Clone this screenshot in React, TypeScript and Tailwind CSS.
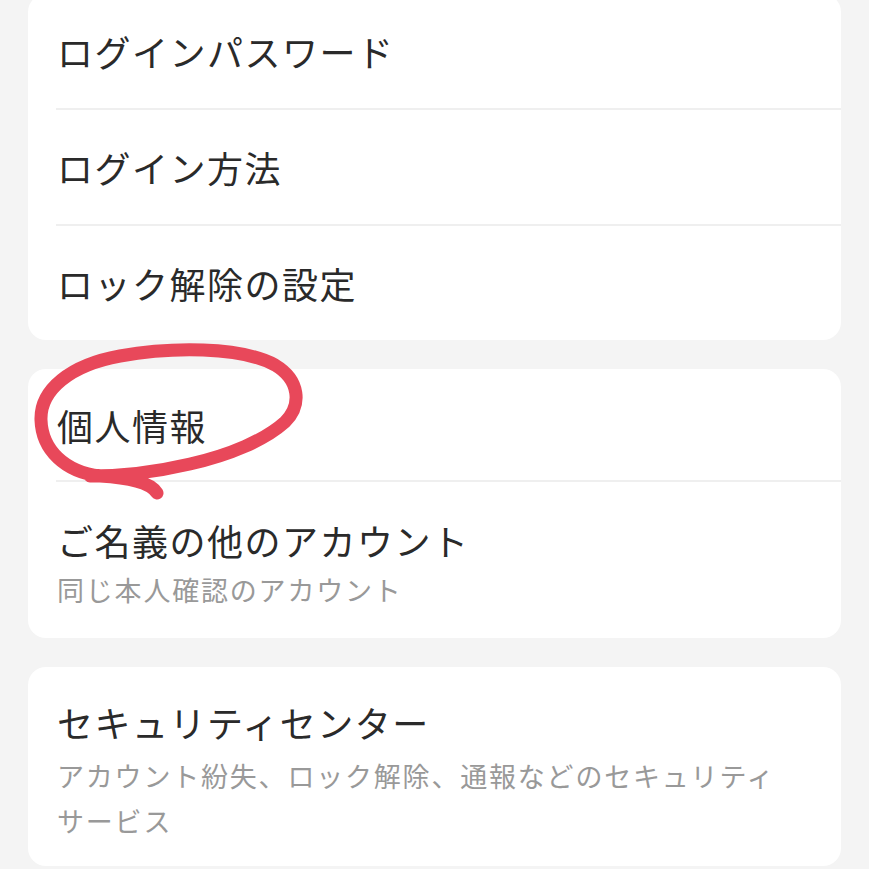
const font = { fontFamily: '"Noto Sans CJK JP", "Noto Sans", sans-serif' };

function Row({ title, last }: { title: string; last?: boolean }) {
  return (
    <div
      className={`ml-[28px] pl-[1px] flex items-center ${
        last ? "h-[114px]" : "h-[116px] border-b-2 border-[#efefef]"
      }`}
    >
      <span className="text-[36px] tracking-[1.5px] text-[#2a2a2a]">{title}</span>
    </div>
  );
}

function RedCircle() {
  return (
    <svg
      className="absolute left-0 top-0 pointer-events-none"
      width="869"
      height="869"
      viewBox="0 0 869 869"
    >
      <path
        d="M 157 493 C 150 482, 130 478, 100 476 C 65 472, 42 450, 41 420 C 40 390, 70 365, 120 356 C 170 347, 240 346, 275 365 C 300 380, 302 405, 285 422 C 265 440, 230 455, 190 464 C 160 471, 125 476, 90 476"
        fill="none"
        stroke="#e8485a"
        strokeWidth="13"
        strokeLinecap="round"
        strokeLinejoin="round"
      />
    </svg>
  );
}

export default function App() {
  return (
    <div className="relative min-h-[869px] bg-[#f4f4f4] px-[28px] overflow-hidden" style={font}>
      <div className="flex flex-col gap-[29px] -mt-[6px]">
        {/* アカウント設定 */}
        <div className="bg-white rounded-[18px]">
          <Row title="ログインパスワード" />
          <Row title="ログイン方法" />
          <Row title="ロック解除の設定" last />
        </div>

        {/* 個人情報 */}
        <div className="bg-white rounded-[18px]">
          <div className="ml-[28px] pl-[1px] h-[113px] flex items-center border-b-2 border-[#efefef]">
            <span className="text-[36px] tracking-[1.5px] text-[#2a2a2a]">個人情報</span>
          </div>
          <div className="ml-[28px] pl-[1px] pt-[34px] pb-[26px] flex flex-col">
            <span className="text-[36px] leading-[48px] tracking-[1.5px] text-[#2a2a2a]">
              ご名義の他のアカウント
            </span>
            <span className="mt-[4px] text-[27px] leading-[44px] tracking-[1.8px] text-[#999999]">
              同じ本人確認のアカウント
            </span>
          </div>
        </div>

        {/* セキュリティ */}
        <div className="bg-white rounded-[18px]">
          <div className="ml-[28px] pl-[1px] pr-[50px] pt-[31px] pb-[23px] flex flex-col">
            <span className="text-[36px] leading-[48px] tracking-[1.5px] text-[#2a2a2a]">
              セキュリティセンター
            </span>
            <span className="mt-[7px] text-[27px] leading-[45px] tracking-[1.8px] text-[#999999]">
              アカウント紛失、ロック解除、通報などのセキュリティサービス
            </span>
          </div>
        </div>
      </div>
      <RedCircle />
    </div>
  );
}
